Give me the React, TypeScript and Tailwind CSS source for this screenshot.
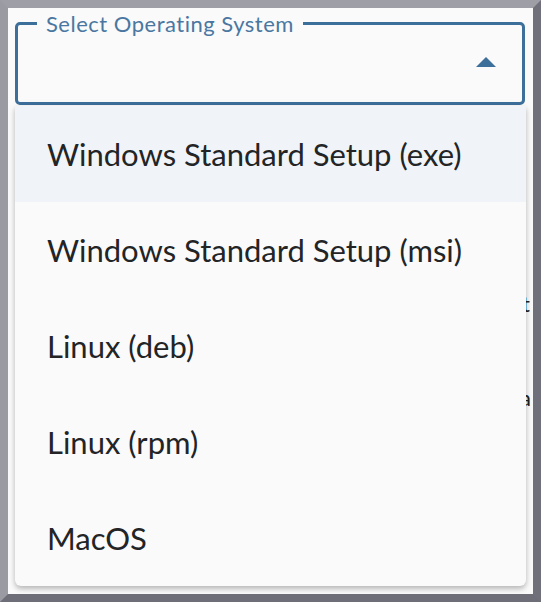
import { useState } from "react";

const OPTIONS = [
  "Windows Standard Setup (exe)",
  "Windows Standard Setup (msi)",
  "Linux (deb)",
  "Linux (rpm)",
  "MacOS",
];

const font = { fontFamily: '"Lato", "Open Sans", sans-serif' };

export default function App() {
  const [hover] = useState(0);

  return (
    <div
      className="h-[602px] w-[541px] border-8 border-t-[#9e9ea6] border-l-[#9a9aa2] border-r-[#70707a] border-b-[#6e6e78] bg-[#fafafa]"
      style={font}
    >
      <div className="relative h-full w-full overflow-hidden px-[7px] pt-[3px]">
        {/* select box */}
        <fieldset className="mr-px h-[94px] min-w-0 rounded-[5px] border-[3px] border-[#3d6f9b] px-[19px]">
          <legend className="px-[9px] pt-[2px] text-[22px] leading-[22px] tracking-[0.5px] text-[#4a77a1]">
            Select Operating System
          </legend>
          <div className="flex h-[54px] items-center justify-end pr-[7px]">
            <svg width="20" height="10" viewBox="0 0 20 10">
              <path d="M0 10 L10 0 L20 10 Z" fill="#3d6f9b" />
            </svg>
          </div>
        </fieldset>

        {/* page content under the open menu */}
        <div className="mt-[188px] text-[22px] leading-none text-[#222]">
          <p className="-mr-[4px] whitespace-nowrap text-right">Choose the installer that best fits your platform first</p>
          <div className="mt-[43px] h-px bg-[#c4c4c4]" />
          <p className="-mr-[5px] mt-[28px] whitespace-nowrap text-right">Then run the setup and follow the prompts to get a</p>
        </div>

        {/* dropdown menu */}
        <ul className="absolute left-[7px] top-[98px] w-[511px] overflow-hidden rounded-b-[6px] bg-[#fafafa] shadow-[0_3px_5px_rgba(0,0,0,0.22),0_1px_10px_rgba(0,0,0,0.08)]">
          {OPTIONS.map((o, i) => (
            <li
              key={o}
              className={`flex h-[96px] items-center px-[32px] text-[31px] text-[#222426] ${
                i === hover ? "bg-[#f0f4f8]" : ""
              }`}
            >
              {o}
            </li>
          ))}
        </ul>
      </div>
    </div>
  );
}
